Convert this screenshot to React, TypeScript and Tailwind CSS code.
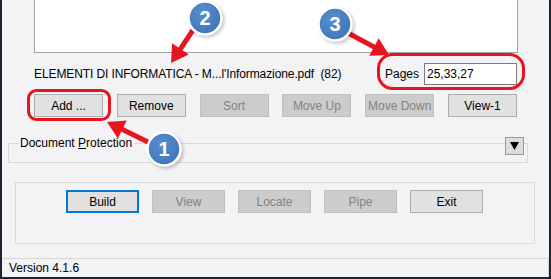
const font = { fontFamily: '"Liberation Sans", Arial, sans-serif' };

function Btn({ label, disabled, w = "w-[69px]", h = "h-[23px]", focus }: { label: string; disabled?: boolean; w?: string; h?: string; focus?: boolean }) {
  const base = `${w} ${h} flex items-center justify-center text-[12px]`;
  if (disabled) return <div className={`${base} bg-[#cccccc] border border-[#bfbfbf] text-[#838383]`}>{label}</div>;
  if (focus) return <div className={`${base} bg-[#e1e1e1] border-2 border-[#0078d7] text-black`}>{label}</div>;
  return <div className={`${base} bg-[#e1e1e1] border border-[#adadad] text-black`}>{label}</div>;
}

function arrow(x1: number, y1: number, x2: number, y2: number, hl = 17, hw = 10) {
  const dx = x2 - x1;
  const dy = y2 - y1;
  const len = Math.hypot(dx, dy);
  const ux = dx / len;
  const uy = dy / len;
  const bx = x2 - ux * hl;
  const by = y2 - uy * hl;
  const px = -uy;
  const py = ux;
  const pts = `${x2},${y2} ${bx + px * hw},${by + py * hw} ${bx - px * hw},${by - py * hw}`;
  return (
    <g>
      <line x1={x1} y1={y1} x2={bx + ux * 2} y2={by + uy * 2} stroke="#e8141f" strokeWidth={5} />
      <polygon points={pts} fill="#e8141f" />
    </g>
  );
}

function Badge({ cx, cy, n }: { cx: number; cy: number; n: string }) {
  return (
    <g>
      <circle cx={cx + 2} cy={cy + 2} r={18} fill="#000" opacity={0.18} filter="url(#blur)" />
      <circle cx={cx} cy={cy} r={16.5} fill="url(#bg)" stroke="#ffffff" strokeWidth={2.5} />
      <text x={cx} y={cy + 7} textAnchor="middle" fontSize={20} fontWeight={700} fill="#ffffff" fontFamily="Liberation Sans, Arial, sans-serif">
        {n}
      </text>
    </g>
  );
}

export default function App() {
  return (
    <div className="relative w-[551px] h-[279px] overflow-hidden" style={font}>
      <div className="w-[551px] h-[279px] bg-[#f3f2f5] border-l-2 border-r-2 border-b-2 border-[#1e2233] flex flex-col text-[12px] text-black">
        <div className="ml-[32px] w-[484px] h-[53px] bg-white border border-t-0 border-[#a0a0a0]" />
        <div className="mt-[10px] h-[22px] px-[32px] flex items-center">
          <span className="flex-1 whitespace-pre tracking-[-0.1px]">ELEMENTI DI INFORMATICA - M...l'Informazione.pdf  (82)</span>
          <span>
            Pa<span className="underline">g</span>es
          </span>
          <div className="ml-[5px] w-[93px] h-[22px] bg-white border border-[#7a7a7a] flex items-center pl-[2px]">25,33,27</div>
        </div>
        <div className="mt-[9px] px-[32px] flex justify-between">
          <Btn label="Add ..." />
          <Btn label="Remove" />
          <Btn label="Sort" disabled />
          <Btn label="Move Up" disabled />
          <Btn label="Move Down" disabled />
          <Btn label="View-1" />
        </div>
        <div className="relative mt-[26px] ml-[6px] w-[520px] h-[20px] border border-[#dadada]">
          <span className="absolute -top-[9px] left-[9px] px-[2px] bg-[#f3f2f5] leading-[16px]">
            Document <span className="underline">P</span>rotection
          </span>
          <div className="absolute -top-[7px] right-[3px] w-[19px] h-[18px] bg-[#dcdcdc] border border-[#9a9a9a] flex items-center justify-center">
            <svg width="9" height="8" viewBox="0 0 9 8">
              <polygon points="0,0 9,0 4.5,8" fill="#000" />
            </svg>
          </div>
        </div>
        <div className="mt-[19px] ml-[13px] w-[520px] h-[62px] border border-[#dadada] pt-[7px] pl-[50px] flex gap-[13px] items-start">
          <Btn label="Build" w="w-[73px]" h="h-[23px]" focus />
          <Btn label="View" w="w-[73px]" h="h-[23px]" disabled />
          <Btn label="Locate" w="w-[73px]" h="h-[23px]" disabled />
          <Btn label="Pipe" w="w-[73px]" h="h-[23px]" disabled />
          <Btn label="Exit" w="w-[73px]" h="h-[23px]" />
        </div>
        <div className="mt-[14px] flex-1 border-t border-r border-[#d6d6d6] pl-[7px] flex items-center">Version 4.1.6</div>
      </div>
      <svg className="absolute top-0 left-0 pointer-events-none" width={551} height={279} viewBox="0 0 551 279">
        <defs>
          <radialGradient id="bg" cx="40%" cy="35%" r="70%">
            <stop offset="0%" stopColor="#578ccd" />
            <stop offset="100%" stopColor="#4076b8" />
          </radialGradient>
          <filter id="blur">
            <feGaussianBlur stdDeviation={1.5} />
          </filter>
        </defs>
        <rect x={28.5} y={90.5} width={81} height={29} rx={8} fill="none" stroke="#e8141f" strokeWidth={3} />
        <rect x={378.5} y={54.5} width={145} height={34} rx={14} fill="none" stroke="#e8141f" strokeWidth={3} />
        {arrow(193, 30, 171, 63)}
        {arrow(348, 33, 389, 55)}
        {arrow(150, 143, 107, 122)}
        <Badge cx={205} cy={18} n="2" />
        <Badge cx={335} cy={24} n="3" />
        <Badge cx={164} cy={149} n="1" />
      </svg>
    </div>
  );
}
